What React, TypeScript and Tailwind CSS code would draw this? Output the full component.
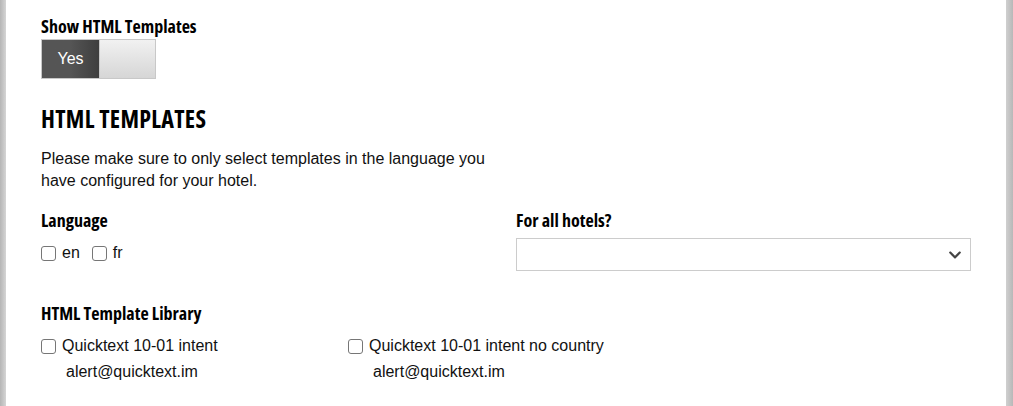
import { FaChevronDown } from "react-icons/fa";

const heading = "font-['Open_Sans',sans-serif] font-bold font-stretch-condensed text-black";
const body = "font-['Liberation_Sans',Arial,sans-serif] text-[16px] text-[#111]";

function Box() {
  return <span className="inline-block w-[15px] h-[15px] rounded-[3px] border border-[#767676] bg-white shrink-0" />;
}

function Toggle() {
  return (
    <div className="flex w-[115px] h-[40px] border border-[#c8c8c8]">
      <div className="w-[57px] h-full flex items-center justify-center bg-gradient-to-r from-[#555] via-[#555] to-[#3e3e3e] text-white font-['Liberation_Sans',Arial,sans-serif] text-[16px]">
        Yes
      </div>
      <div className="flex-1 h-full bg-gradient-to-b from-[#f1f1f1] to-[#d6d6d6] border-l border-[#c8c8c8]" />
    </div>
  );
}

function Template({ name, email }: { name: string; email: string }) {
  return (
    <div className="w-[307px]">
      <label className="flex items-center gap-[6px]">
        <Box />
        <span className={body}>{name}</span>
      </label>
      <div className={`${body} pl-[25px] mt-[2px]`}>{email}</div>
    </div>
  );
}

export default function App() {
  return (
    <div className="flex w-[1013px] h-[406px] bg-white overflow-hidden">
      <div className="w-[6px] h-full bg-gradient-to-r from-[#b5b5b5] to-[#d5d5d5]" />
      <div className="flex-1 px-[35px] pt-[14px]">
        <div className={`${heading} text-[18px] leading-[25px]`}>Show HTML Templates</div>
        <Toggle />

        <h2 className={`${heading} text-[24px] leading-[32px] mt-[24px] tracking-[0.3px]`}>HTML TEMPLATES</h2>
        <p className={`${body} leading-[22px] mt-[13px] w-[455px]`}>
          Please make sure to only select templates in the language you have configured for your hotel.
        </p>

        <div className="grid grid-cols-2 gap-[20px] mt-[16px]">
          <div>
            <div className={`${heading} text-[18px] leading-[25px]`}>Language</div>
            <div className="flex items-center mt-[8px]">
              <label className="flex items-center gap-[6px]">
                <Box />
                <span className={body}>en</span>
              </label>
              <label className="flex items-center gap-[6px] ml-[12px]">
                <Box />
                <span className={body}>fr</span>
              </label>
            </div>
          </div>
          <div>
            <div className={`${heading} text-[18px] leading-[25px]`}>For all hotels?</div>
            <div className="mt-[5px] h-[33px] border border-[#cccccc] flex items-center justify-end pr-[8px] bg-white">
              <FaChevronDown className="text-[#444] w-[14px] h-[14px]" />
            </div>
          </div>
        </div>

        <div className={`${heading} text-[18px] leading-[25px] mt-[30px]`}>HTML Template Library</div>
        <div className="flex mt-[8px]">
          <Template name="Quicktext 10-01 intent" email="alert@quicktext.im" />
          <Template name="Quicktext 10-01 intent no country" email="alert@quicktext.im" />
        </div>
      </div>
      <div className="w-[7px] h-full bg-gradient-to-r from-[#d0d0d0] to-[#b8b8b8]" />
    </div>
  );
}
